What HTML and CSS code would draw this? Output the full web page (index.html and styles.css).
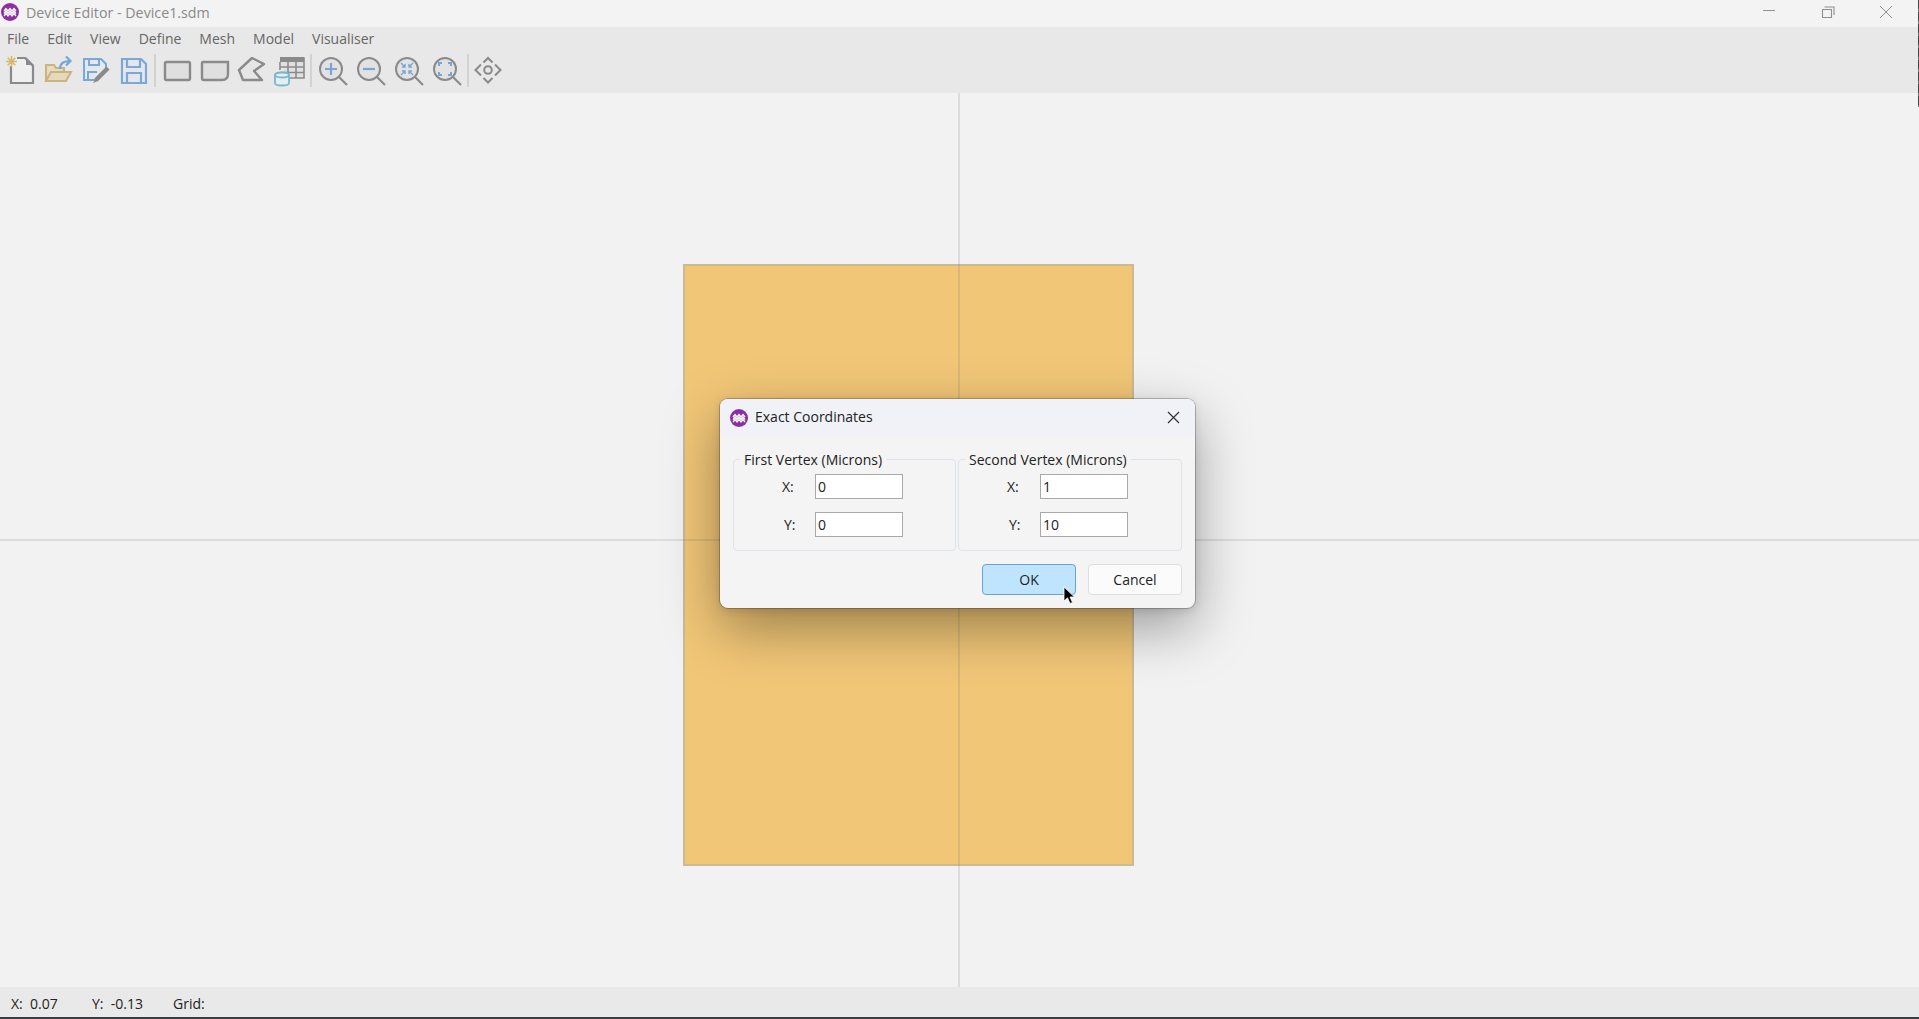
FILE: index.html
```html
<!DOCTYPE html>
<html lang="en">
  <head>
    <title>Device Editor - Device1.sdm</title>
    <link rel="stylesheet" href="styles.css">
  </head>
  <body>
    <svg class="defs" width="0" height="0">
      <symbol id="logo" viewBox="0 0 18 18">
        <circle cx="9" cy="9" r="9" fill="#8b2fa3" />
        <path d="M3 8 5 5.500 7 8 9 5.500 11 8 13 5.500 15 8M3 10.500 5 8 7 10.500 9 8 11 10.500 13 8 15 10.500M3 13 5 10.500 7 13 9 10.500 11 13 13 10.500 15 13" fill="none" stroke="#fff" stroke-width="1.300" />
      </symbol>
      <symbol id="lens" viewBox="0 0 38 36">
        <circle cx="17" cy="17" r="11" fill="#e2e2e2" stroke="#8a8a8a" stroke-width="2" />
        <path d="M25 25 33 33" stroke="#8a8a8a" stroke-width="2.200" />
      </symbol>
    </svg>

    <div class="app">
      <div class="edge"></div>

      <div class="titlebar">
        <svg class="logo"><use href="#logo" /></svg>
        <span class="title">Device Editor - Device1.sdm</span>
        <div class="winctl">
          <svg width="14" height="14" viewBox="0 0 14 14"><path d="M1 5.500H13" stroke="#909090" stroke-width="1" /></svg>
          <svg width="14" height="14" viewBox="0 0 14 14"><path d="M1.500 4.500h9v8h-9zM3.500 2h9.500v8" fill="none" stroke="#909090" stroke-width="1.100" /></svg>
          <svg width="14" height="14" viewBox="0 0 14 14"><path d="M1 1 13 13M13 1 1 13" stroke="#909090" stroke-width="1" /></svg>
        </div>
      </div>

      <div class="menubar">
        <span>File</span>
        <span>Edit</span>
        <span>View</span>
        <span>Define</span>
        <span>Mesh</span>
        <span>Model</span>
        <span>Visualiser</span>
      </div>

      <div class="toolbar">
        <svg class="tool" viewBox="0 0 38 36">
          <path d="M10 14V31H32V14L24 6H16" fill="#efefef" stroke="#8a8a8a" stroke-width="2.200" />
          <path d="M25 5V13H33Z" fill="#8a8a8a" />
          <path d="M10.500 4V15M5 9.500H16M6.700 5.700 14.300 13.300M14.300 5.700 6.700 13.300" stroke="#d9b768" stroke-width="1.500" />
        </svg>
        <svg class="tool" viewBox="0 0 38 36">
          <path d="M7 29V13H15L17 16H25V20" fill="#e6dcc2" stroke="#c9b37f" stroke-width="2" />
          <path d="M7 29 12 20H32L27 29Z" fill="#e4d9bc" stroke="#c9b37f" stroke-width="2" />
          <path d="M21 17C21 11 25 9 31 9M27 4.500 31.500 9 27 13.500" fill="none" stroke="#78a6d8" stroke-width="2.200" />
        </svg>
        <svg class="tool" viewBox="0 0 38 36">
          <path d="M7 7H24L29 12V17L18 28H7Z" fill="#e4e8ec" stroke="#7ba8d8" stroke-width="2" />
          <path d="M12 7V13H22V7M11 28V20H20" fill="none" stroke="#7ba8d8" stroke-width="2" />
          <path d="M31 16 19 28" stroke="#8a8a8a" stroke-width="4.500" />
          <path d="M19 26 16 31 21 29Z" fill="#8a8a8a" />
        </svg>
        <svg class="tool" viewBox="0 0 38 36">
          <path d="M7 7H26L31 12V31H7Z" fill="#e4e8ec" stroke="#7ba8d8" stroke-width="2.200" />
          <path d="M12 7V15H25V7M12 31V21H26V31" fill="none" stroke="#7ba8d8" stroke-width="2.200" />
        </svg>
        <div class="sep sep-a"></div>
        <svg class="tool" viewBox="0 0 38 36">
          <rect x="7" y="10" width="25" height="18" rx="1.500" fill="#dfdfdf" stroke="#8a8a8a" stroke-width="2.400" />
        </svg>
        <svg class="tool" viewBox="0 0 38 36">
          <path d="M7 10H32V22Q32 28 26 28H8Q6 28 6 26V11Q6 10 7 10Z" fill="#dfdfdf" stroke="#8a8a8a" stroke-width="2.400" />
        </svg>
        <svg class="tool" viewBox="0 0 38 36">
          <path d="M5 18 18 6 30 12 20 19 28 28H9Z" fill="#e6e6e6" stroke="#8a8a8a" stroke-width="2.400" stroke-linejoin="round" />
        </svg>
        <svg class="tool" viewBox="0 0 38 36">
          <path d="M8 6H32V26H14" fill="#e0e0e0" stroke="#8a8a8a" stroke-width="1.600" />
          <path d="M8 5H32V10H8Z" fill="#8a8a8a" />
          <path d="M8 10V18M16 10V26M24 10V26M8 15H32M8 20.500H32" stroke="#8a8a8a" stroke-width="1.600" />
          <path d="M3 23V31Q3 33.500 10 33.500T17 31V23Z" fill="#e2eff3" stroke="#7bb8cc" stroke-width="1.800" />
          <ellipse cx="10" cy="23" rx="7" ry="2.500" fill="#e2eff3" stroke="#7bb8cc" stroke-width="1.800" />
        </svg>
        <div class="sep sep-b"></div>
        <svg class="tool" viewBox="0 0 38 36">
          <use href="#lens" />
          <path d="M17 11V23M11 17H23" stroke="#78a6d8" stroke-width="2.200" />
        </svg>
        <svg class="tool" viewBox="0 0 38 36">
          <use href="#lens" />
          <path d="M11 17H23" stroke="#78a6d8" stroke-width="2.200" />
        </svg>
        <svg class="tool" viewBox="0 0 38 36">
          <use href="#lens" />
          <path d="M11 11 15 15M12 15H15V12M23 11 19 15M22 15H19V12M11 23 15 19M12 19H15V22M23 23 19 19M22 19H19V22" fill="none" stroke="#78a6d8" stroke-width="1.400" />
        </svg>
        <svg class="tool" viewBox="0 0 38 36">
          <use href="#lens" />
          <path d="M11 14V11H14M20 11H23V14M11 20V23H14M20 23H23V20" fill="none" stroke="#78a6d8" stroke-width="2" />
        </svg>
        <div class="sep sep-c"></div>
        <svg class="tool" viewBox="0 0 38 36">
          <circle cx="19" cy="18" r="3.800" fill="none" stroke="#8a8a8a" stroke-width="2" />
          <path d="M12 12.500 6.500 18 12 23.500M26 12.500 31.500 18 26 23.500M14.500 10.500 19 6 23.500 10.500M14.500 26 19 30.500 23.500 26" fill="none" stroke="#8a8a8a" stroke-width="2" />
        </svg>
      </div>

      <div class="canvas">
        <div class="shape"></div>
        <div class="axis axis-x"></div>
        <div class="axis axis-y"></div>

        <div class="dialog">
          <div class="dialog-title">
            <svg class="dialog-logo"><use href="#logo" /></svg>
            <span class="dialog-name">Exact Coordinates</span>
            <svg class="dialog-close" width="13" height="13" viewBox="0 0 13 13"><path d="M1 1 12 12M12 1 1 12" stroke="#333" stroke-width="1.200" /></svg>
          </div>
          <div class="dialog-body">
            <div class="groups">
              <fieldset>
                <legend>First Vertex (Microns)</legend>
                <div class="coord"><label>X:</label><input type="text" value="0" /></div>
                <div class="coord coord-y"><label>Y:</label><input type="text" value="0" /></div>
              </fieldset>
              <fieldset>
                <legend>Second Vertex (Microns)</legend>
                <div class="coord"><label>X:</label><input type="text" value="1" /></div>
                <div class="coord coord-y"><label>Y:</label><input type="text" value="10" /></div>
              </fieldset>
            </div>
            <div class="actions">
              <button class="btn btn-ok">OK</button>
              <button class="btn">Cancel</button>
            </div>
          </div>
        </div>

        <svg class="pointer" width="14" height="20" viewBox="0 0 14 20">
          <path d="M1 1V15L4.500 11.800 7 17.500 9.500 16.400 7 11H11.500Z" fill="#000" stroke="#fff" stroke-width="0.800" />
        </svg>
      </div>

      <div class="statusbar">
        <span class="stat">X:&nbsp; 0.07</span>
        <span class="stat">Y:&nbsp; -0.13</span>
        <span>Grid:</span>
      </div>
    </div>
  </body>
</html>
```

FILE: styles.css
```css
html,
body {
  margin: 0;
  height: 100%;
  overflow: hidden;
}

body {
  font-family: "Open Sans", "Noto Sans", sans-serif;
  font-size: 14px;
  color: #222;
}

.defs {
  position: absolute;
}

.app {
  position: relative;
  display: flex;
  flex-direction: column;
  height: 100vh;
  background-color: #f2f2f2;
  border-bottom: 2px solid #3c3c44;
  box-sizing: border-box;
}

.edge {
  position: absolute;
  top: 0;
  right: 0;
  width: 1px;
  height: 107px;
  background: repeating-linear-gradient(#444 0, #444 9px, #777 9px, #777 12px);
}

.titlebar {
  display: flex;
  align-items: center;
  height: 27px;
  background-color: #f3f3f3;
  color: #8a8a8a;
  flex: none;
}

.logo {
  width: 18px;
  height: 18px;
  margin: 0 7px 3px 1px;
}

.title {
  margin-bottom: 2px;
  font-size: 14.25px;
}

.winctl {
  display: flex;
  gap: 44.5px;
  margin-left: auto;
  margin-right: 26px;
  margin-bottom: 3px;
}

.menubar {
  display: flex;
  align-items: center;
  gap: 18px;
  height: 23px;
  padding: 0 0 2px 7px;
  background-color: #e8e8e8;
  color: #666;
  flex: none;
}

.toolbar {
  display: flex;
  align-items: center;
  height: 36px;
  padding: 0 0 5px 1px;
  background-color: #e8e8e8;
  flex: none;
}

.tool {
  width: 38px;
  height: 36px;
  flex: none;
}

.sep {
  width: 2px;
  height: 33px;
  background-color: #d2d2d2;
}

.sep-a {
  margin: 0 2px 0 1px;
}

.sep-b {
  margin: 0 2px 0 0;
}

.sep-c {
  margin: 0 0 0 1px;
}

.canvas {
  position: relative;
  flex: 1;
}

.shape {
  position: absolute;
  left: 683px;
  top: 171px;
  width: 447px;
  height: 598px;
  background-color: #f1c677;
  border: 2px solid #c9ba98;
}

.axis {
  position: absolute;
  background-color: rgba(110, 110, 110, 0.17);
}

.axis-x {
  left: 0;
  right: 0;
  top: 446px;
  height: 2px;
}

.axis-y {
  left: 958px;
  top: 0;
  bottom: 0;
  width: 2px;
}

.dialog {
  position: absolute;
  left: 720px;
  top: 306px;
  width: 475px;
  height: 209px;
  background-color: #f4f4f4;
  border-radius: 8px;
  box-shadow: 0 0 0 1px rgba(0, 0, 0, 0.22), 0 20px 55px rgba(0, 0, 0, 0.36), 0 2px 10px rgba(0, 0, 0, 0.12);
  color: #222;
}

.dialog-title {
  display: flex;
  align-items: center;
  height: 37px;
  padding: 0 15px 0 10px;
  background-color: #f0f2f8;
  border-radius: 8px 8px 0 0;
}

.dialog-logo {
  width: 18px;
  height: 18px;
  margin-right: 7px;
}

.dialog-name {
  margin-bottom: 2px;
}

.dialog-close {
  margin-left: auto;
}

.dialog-body {
  padding: 14px 13px 0;
}

.groups {
  display: grid;
  grid-template-columns: 223px 224px;
  gap: 2px;
}

fieldset {
  margin: 0;
  padding: 5px 0 13px;
  border: 1px solid #dce3ea;
  border-radius: 4px;
}

legend {
  margin-left: 6px;
  padding: 0 4px;
}

.coord {
  display: flex;
  align-items: center;
  padding-left: 48px;
  margin-bottom: 13px;
}

.coord:last-child {
  margin-bottom: 0;
}

.coord label {
  width: 33px;
}

.coord-y label {
  text-indent: 2px;
}

.coord input {
  width: 88px;
  height: 25px;
  box-sizing: border-box;
  padding: 0 2px;
  border: 1px solid #a9a9a9;
  border-radius: 0;
  background: #fff;
  color: #222;
  font: inherit;
  outline: none;
}

.actions {
  display: flex;
  justify-content: flex-end;
  gap: 12px;
  margin-top: 13px;
}

.btn {
  width: 94px;
  height: 31px;
  padding: 0;
  background-color: #fbfbfb;
  border: 1px solid #dedede;
  border-radius: 4px;
  color: #222;
  font: inherit;
}

.btn-ok {
  background-color: #bee5fd;
  border-color: #6ba2cf;
}

.pointer {
  position: absolute;
  left: 1063px;
  top: 493px;
}

.statusbar {
  display: flex;
  align-items: center;
  height: 28px;
  padding: 2px 0 0 11px;
  background-color: #e9e9e9;
  color: #222;
  flex: none;
}

.stat {
  width: 81px;
}
```
